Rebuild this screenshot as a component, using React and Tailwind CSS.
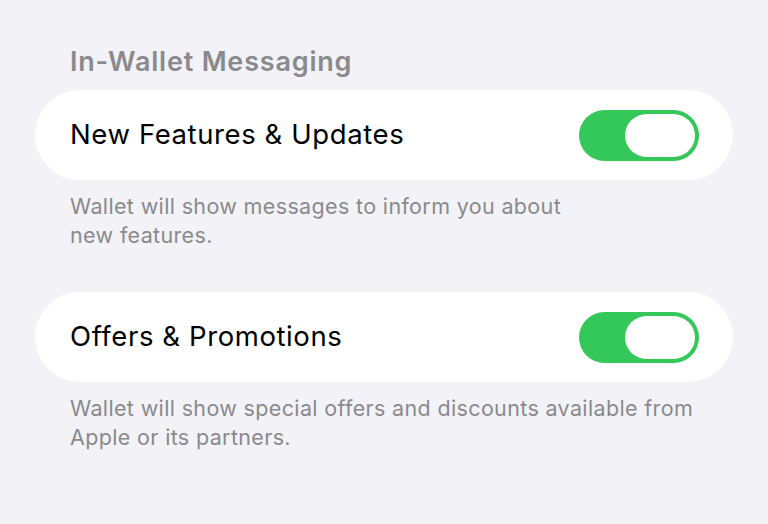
import React, { useState } from 'react';

const Toggle = ({ on, onChange }) => (
  <button
    onClick={() => onChange(!on)}
    className={`flex items-center w-[120px] h-[51px] rounded-full p-[4px] transition-colors ${
      on ? 'bg-[#34c759] justify-end' : 'bg-[#e9e9ea] justify-start'
    }`}
  >
    <span className="block w-[70px] h-[43px] rounded-full bg-white" />
  </button>
);

const SettingRow = ({ label, footer, on, onChange }) => (
  <div>
    <div className="flex items-center justify-between h-[90px] bg-white rounded-full pl-[35px] pr-[34px]">
      <span className="text-[27.5px] text-black tracking-[0.6px]">{label}</span>
      <Toggle on={on} onChange={onChange} />
    </div>
    <p className="px-[35px] pt-[12px] text-[21.5px] leading-[29px] text-[#8a8a8e] tracking-[0.35px]">
      {footer}
    </p>
  </div>
);

export default function App() {
  const [features, setFeatures] = useState(true);
  const [offers, setOffers] = useState(true);

  return (
    <div
      className="w-full min-h-[524px] bg-[#f2f2f7] px-[35px] pt-[44px]"
      style={{ fontFamily: 'Inter, "Noto Sans", sans-serif' }}
    >
      <h2 className="px-[35px] text-[27px] font-semibold text-[#8a8a8e] leading-[36px] mb-[10px] tracking-[0.8px]">
        In-Wallet Messaging
      </h2>
      <div className="flex flex-col gap-[42px]">
        <SettingRow
          label="New Features & Updates"
          footer={<>Wallet will show messages to inform you about<br />new features.</>}
          on={features}
          onChange={setFeatures}
        />
        <SettingRow
          label="Offers & Promotions"
          footer={<>Wallet will show special offers and discounts available from<br />Apple or its partners.</>}
          on={offers}
          onChange={setOffers}
        />
      </div>
    </div>
  );
}
